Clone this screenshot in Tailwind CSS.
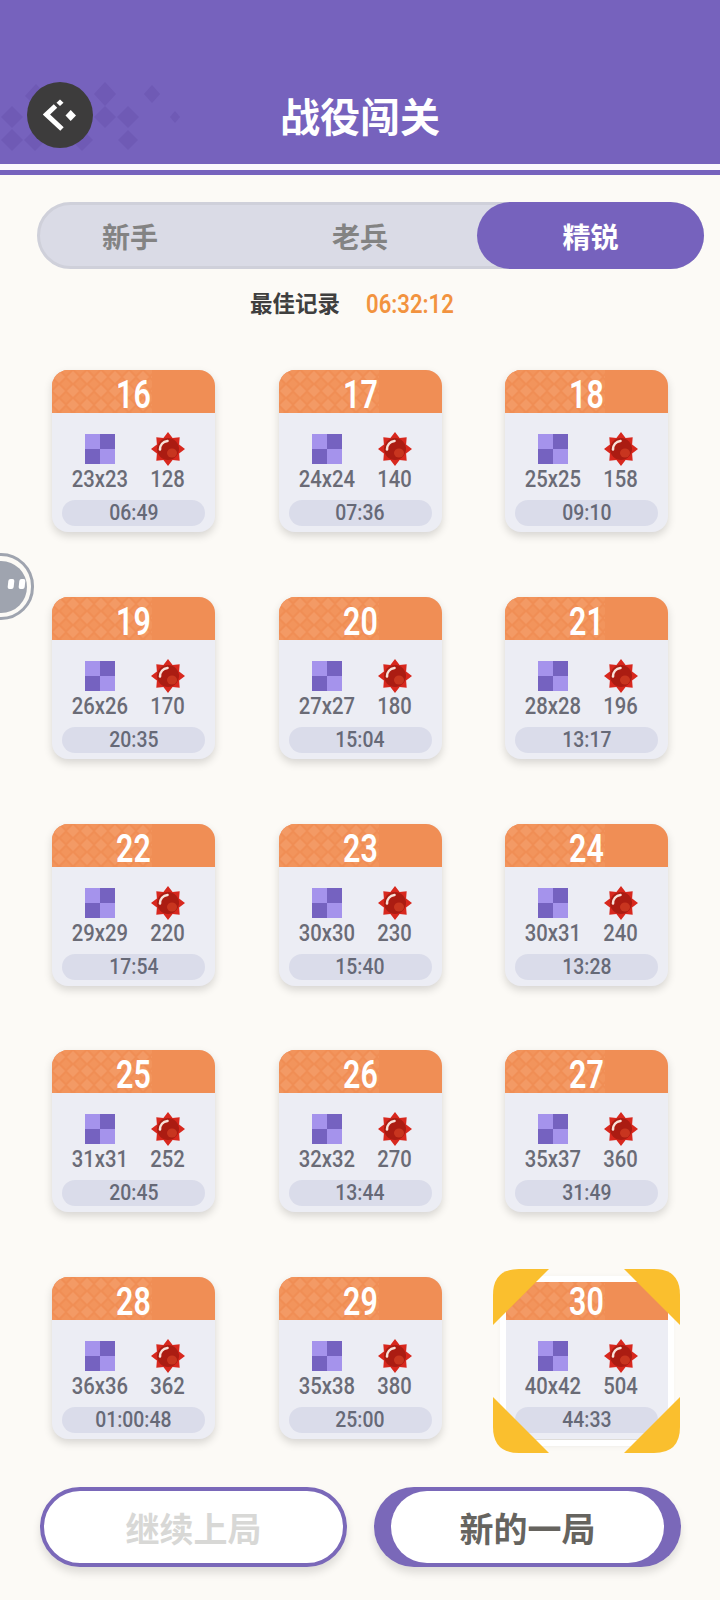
<!DOCTYPE html>
<html lang="zh-CN">
  <head>
    <meta charset="UTF-8" />
    <meta name="viewport" content="width=device-width, initial-scale=1.0" />
    <title>战役闯关</title>
    <script src="https://cdn.jsdelivr.net/npm/@tailwindcss/browser@4"></script>
  </head>
  <body class="bg-[#fcfaf6] font-['Noto_Sans_CJK_SC',sans-serif] w-[720px] h-[1600px] overflow-hidden relative">
    <!-- shared icons -->
    <svg width="0" height="0" class="absolute">
      <defs>
        <symbol id="grid-icon" viewBox="0 0 30 30">
          <rect width="30" height="30" fill="#a593ec" />
          <rect x="15" width="15" height="15" fill="#7562c0" />
          <rect y="15" width="15" height="15" fill="#7562c0" />
        </symbol>
        <symbol id="mine-icon" viewBox="0 0 34 34">
          <polygon fill="#d8281e" points="17,0 21.600,5.900 28.700,5.300 28.100,12.400 34,17 28.100,21.600 28.700,28.700 21.600,28.100 17,34 12.400,28.100 5.300,28.700 5.900,21.600 0,17 5.900,12.400 5.300,5.300 12.400,5.900" />
          <circle cx="17" cy="17" r="11" fill="#ab1c12" />
          <ellipse cx="21" cy="21" rx="5" ry="4.500" fill="#c8351f" />
          <path d="M9 17.500 C9 13 12 9.500 16.500 9" fill="none" stroke="#f8e2da" stroke-width="2.600" stroke-linecap="round" />
        </symbol>
        <pattern id="card-dots" width="14" height="14" patternUnits="userSpaceOnUse">
          <polygon points="7,1 13,7 7,13 1,7" fill="#f39a65" />
          <polygon points="0,-5 5,0 0,5 -5,0" fill="#f2945c" />
          <polygon points="14,-5 19,0 14,5 9,0" fill="#f2945c" />
          <polygon points="0,9 5,14 0,19 -5,14" fill="#f2945c" />
          <polygon points="14,9 19,14 14,19 9,14" fill="#f2945c" />
        </pattern>
      </defs>
    </svg>

    <!-- Header -->
    <header class="relative h-[175px] bg-[#7662bd]">
      <svg class="absolute left-0 top-[80px]" width="190" height="74" viewBox="0 0 190 74" fill="#6f5ab5">
        <polygon points="36,4 47,16 36,27 25,16" />
        <polygon points="105,2 116,14 105,26 94,14" />
        <polygon points="152,5 160,14 152,23 144,14" />
        <polygon points="12,26 23,37 12,48 1,37" />
        <polygon points="105,26 116,37 105,48 94,37" />
        <polygon points="128,26 139,37 128,48 117,37" />
        <polygon points="175,31 180,37 175,43 170,37" />
        <polygon points="12,49 23,60 12,71 1,60" />
        <polygon points="35,49 46,60 35,71 24,60" />
        <polygon points="82,49 93,60 82,71 71,60" />
        <polygon points="128,50 138,60 128,70 118,60" />
      </svg>
      <button class="absolute left-[27px] top-[82px] w-[66px] h-[66px] rounded-full bg-[#3d3c3c] flex items-center justify-center">
        <svg width="34" height="34" viewBox="0 0 34 34" fill="#fff">
          <path d="M12.500 8 L3.500 16.500 L19 31" fill="none" stroke="#fff" stroke-width="5" />
          <polygon points="17,1.500 20.500,4.700 17,8 13.500,4.700" />
          <polygon points="27.700,12 33,17.500 27.700,23 22.500,17.500" />
        </svg>
      </button>
      <h1 class="pt-[90px] text-center text-white text-[40px] leading-[50px] font-bold">战役闯关</h1>
      <div class="absolute left-0 right-0 top-[164px] h-[6px] bg-[#fbf8fd]"></div>
    </header>

    <!-- Difficulty tabs -->
    <div class="mt-[27px] ml-[37px] w-[667px] h-[67px] rounded-full bg-[#dadbe6] border-[3px] border-[#cfd0da] flex items-center relative">
      <span class="w-[180px] text-center text-[28px] font-bold text-[#838383]">新手</span>
      <span class="w-[180px] ml-[50px] text-center text-[28px] font-bold text-[#838383]">老兵</span>
      <span class="absolute right-[-3px] top-[-3px] w-[227px] h-[67px] rounded-full bg-[#7662bd] text-white text-[28px] font-bold flex items-center justify-center">精锐</span>
    </div>

    <!-- Best record -->
    <div class="mt-[17px] ml-[250px] h-[32px] flex items-center">
      <span class="text-[22.500px] leading-[32px] font-bold text-[#3f3f3f]">最佳记录</span>
      <span class="ml-[26px] mt-[4px] inline-block origin-left scale-x-[0.85] text-[26px] leading-[32px] font-semibold text-[#f2933f] font-['Roboto',sans-serif]">06:32:12</span>
    </div>

    <!-- Levels -->
    <div id="levels" class="mt-[52px] ml-[52px] grid grid-cols-[163px_163px_163px] gap-x-[63.5px] gap-y-[64.75px]"></div>

    <!-- Side floating handle -->
    <div class="absolute left-[-32px] top-[553px] w-[66px] h-[67px] rounded-full border-[3px] border-[#9fa4af] bg-[#fcfaf6] flex items-center justify-center">
      <div class="w-[52px] h-[52px] rounded-full bg-[#9fa4af] flex items-center justify-end pr-[2px] pb-[6px] gap-[5px]">
        <div class="w-[6px] h-[10px] rounded-[2px] bg-white -skew-x-6"></div>
        <div class="w-[6px] h-[10px] rounded-[2px] bg-white -skew-x-6"></div>
      </div>
    </div>

    <!-- Bottom buttons -->
    <div class="absolute left-[40px] top-[1487px] flex gap-[27px]">
      <button class="w-[307px] h-[80px] rounded-full border-4 border-[#7a68b9] bg-white text-[#d8d8d6] text-[34px] font-bold shadow-[0_6px_8px_rgba(0,0,0,0.12)]">继续上局</button>
      <button class="w-[307px] h-[80px] rounded-full bg-[#7a68b9] shadow-[0_6px_8px_rgba(0,0,0,0.12)] pl-[17px] pr-[17px] pt-[4px] pb-[4px]">
        <span class="flex items-center justify-center w-full h-full rounded-full bg-white text-[#66645f] text-[34px] font-bold">新的一局</span>
      </button>
    </div>

    <script>
      const levels = [
        [16, "23x23", 128, "06:49"], [17, "24x24", 140, "07:36"], [18, "25x25", 158, "09:10"],
        [19, "26x26", 170, "20:35"], [20, "27x27", 180, "15:04"], [21, "28x28", 196, "13:17"],
        [22, "29x29", 220, "17:54"], [23, "30x30", 230, "15:40"], [24, "30x31", 240, "13:28"],
        [25, "31x31", 252, "20:45"], [26, "32x32", 270, "13:44"], [27, "35x37", 360, "31:49"],
        [28, "36x36", 362, "01:00:48"], [29, "35x38", 380, "25:00"], [30, "40x42", 504, "44:33"],
      ];

      const selectedMarks = `
        <div class="absolute left-[-5px] right-[-6px] top-[-1px] bottom-[-7px] border-[6px] border-white rounded-[4px]"></div>
        <svg class="absolute left-[-12px] top-[-8px]" width="187" height="184" viewBox="0 0 187 184" fill="#fabf2e">
          <path d="M0 56 V26 Q0 0 26 0 H56 Z" />
          <path d="M131 0 H161 Q187 0 187 26 V56 Z" />
          <path d="M0 128 L56 184 H26 Q0 184 0 158 Z" />
          <path d="M187 128 V158 Q187 184 161 184 H131 Z" />
        </svg>`;

      document.getElementById("levels").innerHTML = levels.map(([num, size, mines, time]) => `
        <div class="relative w-[163px] h-[162px] rounded-[16px] bg-[#ecedf4] shadow-[0_4px_8px_rgba(0,0,0,0.15)]">
          <div class="relative h-[43px] pt-[7px] rounded-t-[16px] bg-[#f08e55] text-center">
            <svg class="absolute left-0 top-0 rounded-tl-[16px]" width="100" height="43"><rect width="100" height="43" fill="url(#card-dots)" /></svg>
            <span class="relative block scale-x-[0.8] font-['Roboto',sans-serif] font-semibold text-white text-[38px] leading-[36px]">${num}</span>
          </div>
          <div class="grid grid-cols-[96px_40px] pt-[21px] justify-items-center text-[#6a6b76] font-['Roboto',sans-serif] font-medium text-[23px] leading-[26px]">
            <svg class="w-[30px] h-[30px]"><use href="#grid-icon" /></svg>
            <svg class="w-[34px] h-[34px] mt-[-2px] mb-[-2px]"><use href="#mine-icon" /></svg>
            <span class="mt-[3px] inline-block scale-x-[0.88]">${size}</span>
            <span class="mt-[3px] inline-block scale-x-[0.88]">${mines}</span>
          </div>
          <div class="mx-[10px] mt-[7px] h-[26px] rounded-full bg-[#dadcea] text-center text-[#666977] font-['Roboto',sans-serif] font-medium text-[22px] leading-[26px]"><span class="inline-block scale-x-[0.88]">${time}</span></div>
          ${num === 30 ? selectedMarks : ""}
        </div>`).join("");
    </script>
  </body>
</html>
